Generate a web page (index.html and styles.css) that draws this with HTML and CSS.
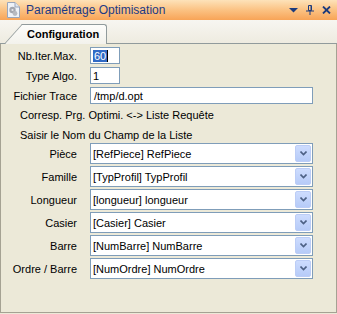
FILE: index.html
```html
<!DOCTYPE html>
<html lang="fr">
<head>
  <meta charset="UTF-8">
  <title>Paramétrage Optimisation</title>
  <link rel="stylesheet" href="styles.css">
</head>
<body>

<div class="window">

  <div class="titlebar">
    <svg class="doc-icon" width="14" height="16" viewBox="0 0 14 16">
      <path d="M1.5 0.5 H9 L13.5 5 V15.5 H1.5 Z" fill="#eef2f8" stroke="#9aa6bb"/>
      <path d="M9 0.5 V5 H13.5" fill="#dfe5ee" stroke="#9aa6bb"/>
      <circle cx="6.5" cy="8" r="3.2" fill="#a3a7b0"/>
      <circle cx="9" cy="11.5" r="2.4" fill="#b7bac1"/>
      <circle cx="6.5" cy="8" r="1.1" fill="#e6e8ec"/>
    </svg>
    <span class="title">Paramétrage Optimisation</span>
    <div class="tools">
      <svg width="9" height="5" viewBox="0 0 9 5"><path d="M0 0 H9 L4.5 4.5 Z" fill="#1c3a7c"/></svg>
      <svg width="8" height="10" viewBox="0 0 8 10">
        <path d="M2.5 0.5 H5.5 V5.5 H2.5 Z" fill="none" stroke="#1c3a7c"/>
        <path d="M5 1 V5" stroke="#1c3a7c"/>
        <path d="M0 6 H8 M4 6 V10" stroke="#1c3a7c"/>
      </svg>
      <svg width="9" height="8" viewBox="0 0 9 8"><path d="M1 0.5 L8 7.5 M8 0.5 L1 7.5" stroke="#1c3a7c" stroke-width="1.8"/></svg>
    </div>
  </div>

  <div class="tabstrip">
    <div class="tab">Configuration</div>
  </div>

  <div class="panel">

    <div class="form">
      <label>Nb.Iter.Max.</label>
      <div class="field short"><span class="selected">60</span><span class="caret"></span></div>

      <label>Type Algo.</label>
      <div class="field short">1</div>

      <label>Fichier Trace</label>
      <div class="field">/tmp/d.opt</div>
    </div>

    <p class="note first">Corresp. Prg. Optimi. &lt;-&gt; Liste Requête</p>
    <p class="note">Saisir le Nom du Champ de la Liste</p>

    <div class="form combos">
      <label>Pièce</label>
      <div class="combo"><span class="combo-text">[RefPiece] RefPiece</span><span class="combo-btn"><svg width="7" height="5" viewBox="0 0 7 5"><path d="M0.5 0.5 L3.5 3.5 L6.5 0.5" fill="none" stroke="#4d6185" stroke-width="1.6"/></svg></span></div>

      <label>Famille</label>
      <div class="combo"><span class="combo-text">[TypProfil] TypProfil</span><span class="combo-btn"><svg width="7" height="5" viewBox="0 0 7 5"><path d="M0.5 0.5 L3.5 3.5 L6.5 0.5" fill="none" stroke="#4d6185" stroke-width="1.6"/></svg></span></div>

      <label>Longueur</label>
      <div class="combo"><span class="combo-text">[longueur] longueur</span><span class="combo-btn"><svg width="7" height="5" viewBox="0 0 7 5"><path d="M0.5 0.5 L3.5 3.5 L6.5 0.5" fill="none" stroke="#4d6185" stroke-width="1.6"/></svg></span></div>

      <label>Casier</label>
      <div class="combo"><span class="combo-text">[Casier] Casier</span><span class="combo-btn"><svg width="7" height="5" viewBox="0 0 7 5"><path d="M0.5 0.5 L3.5 3.5 L6.5 0.5" fill="none" stroke="#4d6185" stroke-width="1.6"/></svg></span></div>

      <label>Barre</label>
      <div class="combo"><span class="combo-text">[NumBarre] NumBarre</span><span class="combo-btn"><svg width="7" height="5" viewBox="0 0 7 5"><path d="M0.5 0.5 L3.5 3.5 L6.5 0.5" fill="none" stroke="#4d6185" stroke-width="1.6"/></svg></span></div>

      <label>Ordre / Barre</label>
      <div class="combo"><span class="combo-text">[NumOrdre] NumOrdre</span><span class="combo-btn"><svg width="7" height="5" viewBox="0 0 7 5"><path d="M0.5 0.5 L3.5 3.5 L6.5 0.5" fill="none" stroke="#4d6185" stroke-width="1.6"/></svg></span></div>
    </div>

  </div>

</div>

</body>
</html>
```

FILE: styles.css
```css
* {
  box-sizing: border-box;
}

body {
  margin: 0;
  font-family: "Liberation Sans", Arial, sans-serif;
  font-size: 11px;
  color: #000;
  background: #ece9d8;
}

.window {
  width: 337px;
  height: 314px;
  display: flex;
  flex-direction: column;
}

/* title bar */
.titlebar {
  height: 20px;
  display: flex;
  align-items: center;
  padding: 0 6px 0 6px;
  background: linear-gradient(#fde2b9, #fbc283 50%, #f8a457);
}

.doc-icon {
  margin-right: 6px;
}

.title {
  flex: 1;
  color: #1b3a86;
  font-size: 12px;
}

.tools {
  display: flex;
  align-items: center;
  gap: 8px;
}

/* tab strip */
.tabstrip {
  height: 24px;
  display: flex;
  align-items: flex-end;
  padding-left: 23px;
  background: linear-gradient(#f7f6f1, #eeebe0);
  border-bottom: 1px solid #919b9c;
}

.tab {
  position: relative;
  z-index: 1;
  width: 84px;
  height: 20px;
  margin-bottom: -1px;
  padding-left: 4px;
  line-height: 19px;
  font-weight: bold;
  font-size: 11px;
  border-top: 1px solid #919b9c;
  border-right: 1px solid #919b9c;
  border-top-right-radius: 3px;
  background: linear-gradient(#fdfdfb, #f3f2ec);
}

.tab::before {
  content: '';
  position: absolute;
  top: -1px;
  bottom: 0;
  left: -19px;
  width: 26px;
  z-index: -1;
  border-top: 1px solid #919b9c;
  border-left: 1px solid #919b9c;
  background: linear-gradient(#fdfdfb, #f3f2ec);
  transform-origin: bottom left;
  transform: skewX(-42deg);
}

/* panel */
.panel {
  flex: 1;
  margin-bottom: 1px;
  padding-top: 3px;
  border-left: 1px solid #a5a293;
  border-right: 1px solid #a5a293;
  border-bottom: 1px solid #a5a293;
  background: #ece9d8;
}

.form {
  display: grid;
  grid-template-columns: 76px 223px;
  column-gap: 13px;
  row-gap: 3px;
}

.form label {
  text-align: right;
  align-self: center;
}

.field {
  height: 17px;
  padding-left: 3px;
  display: flex;
  align-items: center;
  border: 1px solid #7f9db9;
  background: #fff;
}

.field.short {
  width: 30px;
  padding-left: 2px;
}

.selected {
  background: #316ac5;
  color: #fff;
  line-height: 12px;
  padding: 0 1px;
}

.caret {
  width: 1px;
  height: 12px;
  background: #000;
}

.note {
  margin: 6px 0 0 19px;
  line-height: 14px;
}

.note.first {
  margin-top: 4px;
}

.combos {
  margin-top: 1px;
  row-gap: 2px;
}

.combo {
  height: 21px;
  padding: 1px;
  padding-left: 2px;
  display: flex;
  align-items: center;
  border: 1px solid #7f9db9;
  background: #fff;
}

.combo-text {
  flex: 1;
}

.combo-btn {
  width: 16px;
  height: 17px;
  display: flex;
  align-items: center;
  justify-content: center;
  border: 1px solid #bccdf6;
  border-radius: 2px;
  background: linear-gradient(#cddcfe, #b6cbf8);
}
```
